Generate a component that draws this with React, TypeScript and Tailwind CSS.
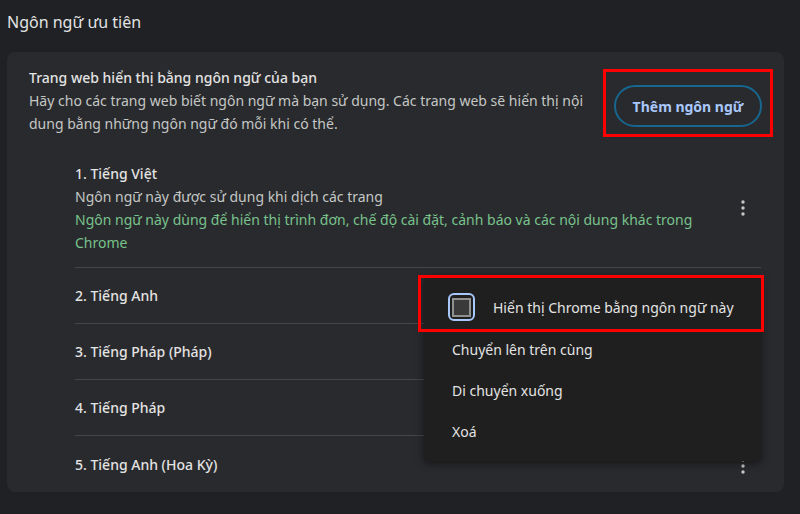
import React from "react";

const FONT = "font-['Segoe_UI','Noto_Sans',sans-serif]";

const languages = [
  "2. Tiếng Anh",
  "3. Tiếng Pháp (Pháp)",
  "4. Tiếng Pháp",
  "5. Tiếng Anh (Hoa Kỳ)",
];

function Kebab() {
  return (
    <svg width="4" height="16" viewBox="0 0 4 16" className="shrink-0">
      <circle cx="2" cy="2" r="1.7" fill="#c4c7c5" />
      <circle cx="2" cy="8" r="1.7" fill="#c4c7c5" />
      <circle cx="2" cy="14" r="1.7" fill="#c4c7c5" />
    </svg>
  );
}

function LanguageMenu() {
  return (
    <div className="absolute left-[424px] top-[277px] w-[337px] h-[184px] rounded-[4px] bg-[#1f1f1f] shadow-[0_2px_8px_rgba(0,0,0,0.5)] pt-[8px] text-[14px] text-[#e3e3e3]">
      {/* Checkbox item */}
      <div className="h-[44px] flex items-center pl-[24px]">
        <div className="w-[27px] h-[28px] rounded-[6px] border-2 border-[#a8c7fa] flex items-center justify-center">
          <div className="w-[19px] h-[19px] border-2 border-[#8e918f] bg-[#3a3a3a]" />
        </div>
        <span className="ml-[18px]">Hiển thị Chrome bằng ngôn ngữ này</span>
      </div>
      <div className="h-[41px] flex items-center pl-[28px]">Chuyển lên trên cùng</div>
      <div className="h-[41px] flex items-center pl-[28px]">Di chuyển xuống</div>
      <div className="h-[41px] flex items-center pl-[28px]">Xoá</div>
    </div>
  );
}

export default function App() {
  return (
    <div className={`relative w-[800px] h-[514px] overflow-hidden bg-[#202124] px-[7px] ${FONT}`}>
      {/* Section title */}
      <h2 className="pt-[11px] text-[16px] leading-[22px] text-[#e3e3e3]">Ngôn ngữ ưu tiên</h2>

      {/* Card */}
      <div className="mt-[19px] w-[777px] rounded-[8px] bg-[#292a2d] pl-[22px] pr-[23px] pt-[14px]">
        <div className="flex items-start justify-between">
          <div className="text-[14px] leading-[23px]">
            <div className="font-medium text-[#e3e3e3]">Trang web hiển thị bằng ngôn ngữ của bạn</div>
            <div className="text-[#c4c7c5] w-[570px]">
              Hãy cho các trang web biết ngôn ngữ mà bạn sử dụng. Các trang web sẽ hiển thị nội dung bằng những ngôn
              ngữ đó mỗi khi có thể.
            </div>
          </div>
          <button className="mt-[19px] mr-[-1px] w-[148px] h-[42px] rounded-full border-2 border-[#17668f] text-[14px] font-bold text-[#a8c7fa]">
            Thêm ngôn ngữ
          </button>
        </div>

        {/* Language list */}
        <div className="ml-[46px] mt-[15px]">
          <div className="flex items-center justify-between border-b border-[#444649] pt-[12px] pb-[13px]">
            <div className="text-[14px] leading-[23px]">
              <div className="font-medium text-[#e3e3e3]">1. Tiếng Việt</div>
              <div className="text-[#c4c7c5]">Ngôn ngữ này được sử dụng khi dịch các trang</div>
              <div className="text-[#78c28c] w-[640px]">
                Ngôn ngữ này dùng để hiển thị trình đơn, chế độ cài đặt, cảnh báo và các nội dung khác trong Chrome
              </div>
            </div>
            <div className="mr-[16px]">
              <Kebab />
            </div>
          </div>
          {languages.map((name, i) => (
            <div
              key={name}
              className={`h-[56px] flex items-center justify-between ${i < languages.length - 1 ? "border-b border-[#444649]" : ""}`}
            >
              <span className="text-[14px] font-medium text-[#e3e3e3]">{name}</span>
              {i === languages.length - 1 && (
                <div className="mr-[16px] mt-[4px]">
                  <Kebab />
                </div>
              )}
            </div>
          ))}
        </div>
      </div>

      <LanguageMenu />

      {/* Red highlight boxes */}
      <div className="absolute left-[603px] top-[69px] w-[170px] h-[68px] border-[3px] border-[#ff0000]" />
      <div className="absolute left-[418px] top-[275px] w-[346px] h-[57px] border-[3px] border-[#ff0000]" />
    </div>
  );
}
